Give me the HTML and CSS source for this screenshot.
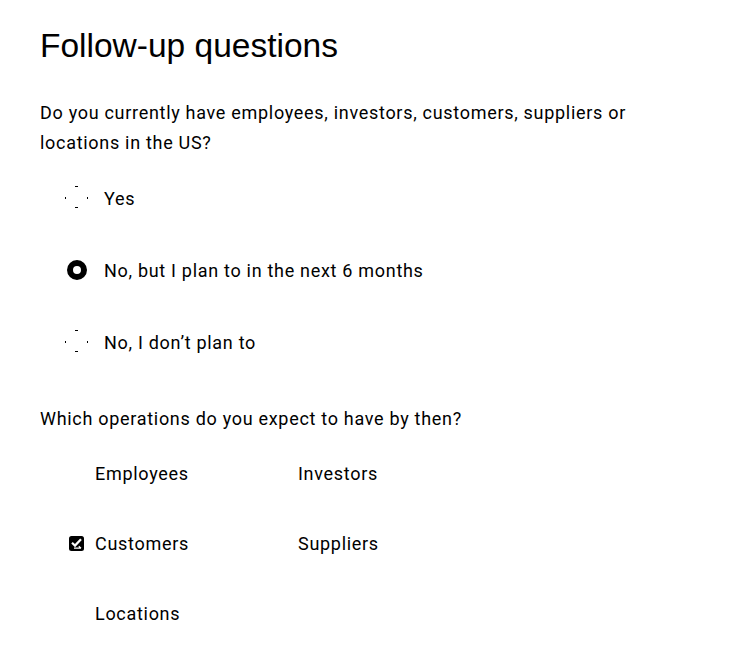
FILE: index.html
```html
<!DOCTYPE html>
<html lang="en">
<head>
<meta charset="utf-8">
<link rel="stylesheet" href="styles.css">
</head>
<body>
<main class="page">
  <h1 class="title">Follow-up questions</h1>
  <p class="question">Do you currently have employees, investors, customers, suppliers or locations in the US?</p>
  <div class="radios">
    <div class="radio-row">
      <span class="radio radio-off">
        <svg width="24" height="24" viewBox="0 0 24 24"><rect x="10" y="0" width="3" height="1" fill="#000"/><rect x="0" y="11" width="1" height="2" fill="#000"/><rect x="22" y="11" width="1" height="2" fill="#000"/><rect x="10" y="21" width="3" height="1" fill="#000"/></svg>
      </span>
      <span class="label">Yes</span>
    </div>
    <div class="radio-row">
      <span class="radio"><span class="radio-on"></span></span>
      <span class="label">No, but I plan to in the next 6 months</span>
    </div>
    <div class="radio-row">
      <span class="radio radio-off">
        <svg width="24" height="24" viewBox="0 0 24 24"><rect x="10" y="0" width="3" height="1" fill="#000"/><rect x="0" y="11" width="1" height="2" fill="#000"/><rect x="22" y="11" width="1" height="2" fill="#000"/><rect x="10" y="21" width="3" height="1" fill="#000"/></svg>
      </span>
      <span class="label">No, I don’t plan to</span>
    </div>
  </div>
  <p class="question q2">Which operations do you expect to have by then?</p>
  <div class="checks">
    <div class="check-item"><span class="box"></span><span class="label">Employees</span></div>
    <div class="check-item"><span class="box"></span><span class="label">Investors</span></div>
    <div class="check-item"><span class="box">
      <svg width="15" height="15" viewBox="0 0 15 15"><rect x="0" y="0" width="15" height="15" rx="2.5" fill="#000"/><path d="M3 6.8 L6 9.6 L12 3.2" stroke="#fff" stroke-width="2.2" fill="none"/><path d="M5 12.2 L12 12.2 M9.8 10.2 L12 12.2" stroke="#fff" stroke-width="1.3" fill="none"/></svg>
    </span><span class="label">Customers</span></div>
    <div class="check-item"><span class="box"></span><span class="label">Suppliers</span></div>
    <div class="check-item"><span class="box"></span><span class="label">Locations</span></div>
  </div>
</main>
</body>
</html>
```
FILE: styles.css
```css
html, body {
  margin: 0;
  padding: 0;
  background: #fff;
}
.page {
  padding: 26px 40px 0 40px;
  font-family: Roboto, "Liberation Sans", sans-serif;
  color: #000;
}
.title {
  margin: 0;
  font-family: "Liberation Sans", Arial, sans-serif;
  font-weight: 400;
  font-size: 33.5px;
  line-height: 40px;
}
.question {
  margin: 32px 0 0 0;
  font-size: 18px;
  line-height: 30px;
  letter-spacing: 0.7px;
  max-width: 640px;
}
.radios {
  display: flex;
  flex-direction: column;
  gap: 48px;
  margin-top: 28px;
  padding-left: 25px;
}
.radio-row {
  display: flex;
  align-items: center;
  gap: 15px;
  height: 24px;
  font-size: 18px;
  letter-spacing: 0.7px;
}
.radio {
  width: 24px;
  height: 24px;
  display: flex;
  align-items: center;
  justify-content: center;
}
.radio-on {
  width: 8px;
  height: 8px;
  border: 6px solid #000;
  border-radius: 50%;
}
.q2 {
  margin-top: 50px;
}
.checks {
  display: grid;
  grid-template-columns: 203px 200px;
  row-gap: 40px;
  margin-top: 24px;
  padding-left: 29px;
}
.check-item {
  display: flex;
  align-items: center;
  gap: 11px;
  height: 30px;
  font-size: 18px;
  letter-spacing: 0.7px;
}
.box {
  width: 15px;
  height: 15px;
  display: block;
}
.box svg { display: block; }
```
